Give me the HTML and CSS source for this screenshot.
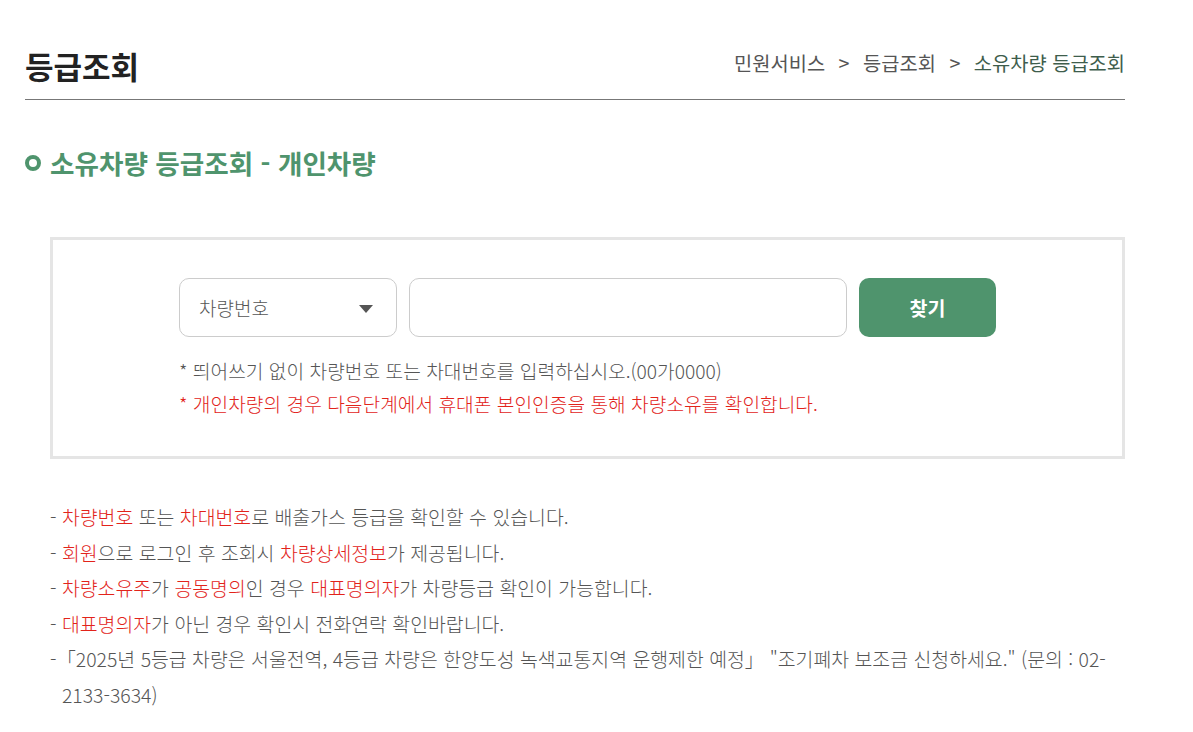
FILE: index.html
```html
<!DOCTYPE html>
<html lang="ko">
<head>
<meta charset="utf-8">
<title>등급조회</title>
<link rel="stylesheet" href="styles.css">
</head>
<body>
<div class="page">
  <header class="page-head">
    <h1 class="page-title">등급조회</h1>
    <nav class="crumbs">
      <span>민원서비스</span><span class="sep">&gt;</span><span>등급조회</span><span class="sep">&gt;</span><span class="current">소유차량 등급조회</span>
    </nav>
  </header>

  <h2 class="sec-title"><span class="ring"></span>소유차량 등급조회 - 개인차량</h2>

  <section class="search-box">
    <div class="search-inner">
      <div class="search-row">
        <div class="select">
          <span>차량번호</span>
          <svg class="caret" width="14" height="8" viewBox="0 0 14 8"><path d="M0 0H14L7 8Z" fill="#555"/></svg>
        </div>
        <div class="input"></div>
        <button class="btn">찾기</button>
      </div>
      <p class="note">* 띄어쓰기 없이 차량번호 또는 차대번호를 입력하십시오.(00가0000)</p>
      <p class="note red">* 개인차량의 경우 다음단계에서 휴대폰 본인인증을 통해 차량소유를 확인합니다.</p>
    </div>
  </section>

  <ul class="info">
    <li>- <em>차량번호</em> 또는 <em>차대번호</em>로 배출가스 등급을 확인할 수 있습니다.</li>
    <li>- <em>회원</em>으로 로그인 후 조회시 <em>차량상세정보</em>가 제공됩니다.</li>
    <li>- <em>차량소유주</em>가 <em>공동명의</em>인 경우 <em>대표명의자</em>가 차량등급 확인이 가능합니다.</li>
    <li>- <em>대표명의자</em>가 아닌 경우 확인시 전화연락 확인바랍니다.</li>
    <li>-「2025년 5등급 차량은 서울전역, 4등급 차량은 한양도성 녹색교통지역 운행제한 예정」 "조기폐차 보조금 신청하세요." (문의 : 02-2133-3634)</li>
  </ul>
</div>
</body>
</html>
```

FILE: styles.css
```css
* { box-sizing: border-box; }
html, body { margin: 0; padding: 0; background: #fff; }
body {
  font-family: "Noto Sans CJK KR", "Noto Sans", sans-serif;
  color: #555;
}
.page {
  width: 1100px;
  margin-left: 25px;
}
.page-head {
  display: flex;
  justify-content: space-between;
  align-items: center;
  padding: 46px 0 14px;
  border-bottom: 1px solid #777;
}
.page-title {
  margin: 0;
  font-size: 31px;
  line-height: 39px;
  font-weight: 700;
  color: #222;
}
.crumbs {
  font-size: 19.8px;
  line-height: 30px;
  color: #555;
  margin-top: -6px;
}
.crumbs .sep { margin: 0 13.5px; }
.crumbs .current { color: #3e5d4c; }

.sec-title {
  display: flex;
  align-items: center;
  margin: 46px 0 0;
  font-size: 26.6px;
  line-height: 34px;
  font-weight: 700;
  color: #4f946d;
}
.ring {
  width: 16px;
  height: 16px;
  border: 4px solid #4f946d;
  border-radius: 50%;
  margin-right: 9px;
}

.search-box {
  margin: 57px 0 0 25px;
  width: 1075px;
  border: 3px solid #e5e5e5;
  padding: 38px 0 35px;
}
.search-inner {
  width: 817px;
  margin: 0 auto;
}
.search-row {
  display: flex;
  gap: 12px;
  height: 59px;
}
.select {
  width: 218px;
  border: 1px solid #ccc;
  border-radius: 10px;
  display: flex;
  align-items: center;
  justify-content: space-between;
  padding: 0 23px 0 19px;
  font-size: 19px;
  font-weight: 300;
  color: #555;
}
.caret { display: block; margin-top: 2px; }
.input {
  flex: 1;
  border: 1px solid #ccc;
  border-radius: 10px;
}
.btn {
  width: 137px;
  border: 0;
  border-radius: 10px;
  background: #4f946d;
  color: #fff;
  font-family: inherit;
  font-size: 19.5px;
  font-weight: 700;
}
.note {
  margin: 0;
  font-size: 19.2px;
  font-weight: 300;
  line-height: 33px;
  color: #555;
}
.search-row + .note { margin-top: 18px; }
.note.red { color: #e2231a; }

.info {
  list-style: none;
  margin: 40px 0 0 25px;
  padding: 0 0 0 12px;
  font-size: 19.4px;
  font-weight: 300;
  line-height: 35.5px;
}
.info li { text-indent: -12px; }
.info em { font-style: normal; color: #e2231a; }
```
